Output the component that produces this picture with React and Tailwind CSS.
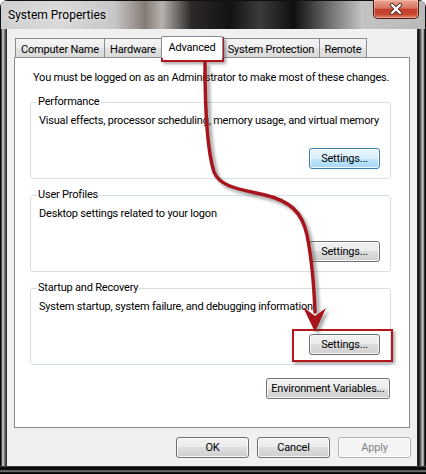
function Btn({ className = "", hot = false, disabled = false, children }) {
  let look =
    "border-[#707070] bg-[linear-gradient(#f2f2f2_0%,#ebebeb_50%,#dddddd_50%,#cfcfcf_100%)] text-black";
  if (hot)
    look =
      "border-[#3c7fb1] bg-[linear-gradient(#eaf6fd_0%,#d9f0fc_50%,#bee6fd_50%,#a7d9f5_100%)] text-black";
  if (disabled) look = "border-[#adb2b5] bg-[#f4f4f4] text-[#838383]";
  return (
    <div
      className={
        "flex h-[21px] shrink-0 items-center justify-center whitespace-nowrap rounded-[3px] border shadow-[inset_0_0_0_1px_rgba(255,255,255,0.8)] leading-none " +
        look +
        " " +
        className
      }
    >
      {children}
    </div>
  );
}

function Group({ title, desc, hot }) {
  return (
    <fieldset className="min-w-0 rounded-[3px] border border-[#d5dfe5] pb-[9px] pl-[8px] pr-[10px]">
      <legend className="-ml-[2px] px-[1px] leading-[16px]">{title}</legend>
      <div className="whitespace-nowrap pt-[3px] leading-[16px]">{desc}</div>
      <div className="mt-[19px] flex justify-end">
        <Btn className="w-[71px]" hot={hot}>
          Settings...
        </Btn>
      </div>
    </fieldset>
  );
}

function Tab({ className = "", selected = false, children }) {
  return (
    <div
      className={
        "flex shrink-0 items-center justify-center whitespace-nowrap border-l border-r border-t border-[#898c95] leading-none " +
        (selected
          ? "relative z-10 h-[22px] rounded-t-[2px] bg-white pb-[1px] "
          : "mb-[1px] h-[19px] bg-[linear-gradient(#f5f5f5_0%,#ececec_50%,#e2e2e2_50%,#dadada_100%)] pt-[2px] ") +
        className
      }
    >
      {children}
    </div>
  );
}

export default function App() {
  return (
    <div className="relative flex h-[474px] w-[426px] flex-col overflow-hidden rounded-t-[8px] bg-black font-['Roboto',sans-serif] text-[11px] tracking-[-0.2px] text-black">
      {/* Title bar */}
      <div className="flex h-[29px] shrink-0 items-start justify-between bg-[linear-gradient(90deg,#cfcfcf_0%,#dadada_14%,#c6c6c6_27%,#857b75_34%,#b7b2ae_38%,#2c2826_45%,#121212_54%,#3b3b3b_61%,#0f0f0f_69%,#6b6b6b_77%,#c3c3c3_85%,#b9b9b9_100%)] shadow-[inset_1px_1px_0_#111,inset_-1px_0_0_#111]">
        <div className="self-center pl-[8px] pt-[1px] text-[12px] tracking-normal [text-shadow:0_0_6px_rgba(255,255,255,0.95)]">
          System Properties
        </div>
        <div className="mr-[7px] flex h-[19px] w-[46px] items-center justify-center rounded-b-[5px] border border-t-0 border-[#4b1a12] bg-[linear-gradient(#eaa797_0%,#d7735f_45%,#c4402c_52%,#c7452e_78%,#e2836c_100%)] shadow-[inset_0_0_0_1px_rgba(255,200,190,0.5)]">
          <svg width="14" height="12" viewBox="0 0 14 12">
            <path d="M3 2 L11 10 M11 2 L3 10" stroke="#4a2a24" strokeWidth="4" strokeLinecap="round" fill="none" />
            <path d="M3 2 L11 10 M11 2 L3 10" stroke="#ffffff" strokeWidth="2.4" strokeLinecap="round" fill="none" />
          </svg>
        </div>
      </div>

      {/* Middle */}
      <div className="flex min-h-0 flex-1">
        <div className="w-[7px] shrink-0 bg-[linear-gradient(90deg,#050505_0px,#050505_1px,#8e8e8e_2px,#d8d8d8_3px,#5a5a5a_5px,#2a2a2a_7px)]" />
        <div className="flex min-w-0 flex-1 flex-col overflow-hidden bg-[#f0f0f0] px-[7px] pt-[7px]">
          {/* Tabs */}
          <div className="flex h-[22px] items-end pl-[1px]">
            <Tab className="w-[90px]">Computer Name</Tab>
            <Tab className="-ml-px w-[58px]">Hardware</Tab>
            <Tab className="-ml-px w-[62px]" selected>
              Advanced
            </Tab>
            <Tab className="-ml-px w-[98px]">System Protection</Tab>
            <Tab className="-ml-px w-[48px]">Remote</Tab>
          </div>
          {/* Panel */}
          <div className="-mt-px flex h-[371px] min-w-0 flex-col border border-[#898c95] bg-white pl-[15px] pr-[18px] pt-[12px]">
            <div className="flex flex-col gap-2">
              <div className="whitespace-nowrap pl-[3px] leading-[16px]">
                You must be logged on as an Administrator to make most of these changes.
              </div>
              <Group
                title="Performance"
                desc="Visual effects, processor scheduling, memory usage, and virtual memory"
                hot
              />
              <Group title="User Profiles" desc="Desktop settings related to your logon" />
              <Group
                title="Startup and Recovery"
                desc="System startup, system failure, and debugging information"
              />
            </div>
            <div className="mr-[1px] mt-[13px] flex justify-end">
              <Btn className="w-[124px]">Environment Variables...</Btn>
            </div>
          </div>
          {/* Bottom buttons */}
          <div className="-mr-[1px] mt-[9px] flex justify-end gap-[8px]">
            <Btn className="w-[73px]">OK</Btn>
            <Btn className="w-[73px]">Cancel</Btn>
            <Btn className="w-[73px]" disabled>
              Apply
            </Btn>
          </div>
        </div>
        <div className="w-[9px] shrink-0 bg-[linear-gradient(90deg,#2a2a2a_0px,#121212_2px,#7b7b7b_4px,#d6d6d6_6px,#5a5a5a_7px,#050505_8px)]" />
      </div>
      <div className="h-[8px] shrink-0 bg-[linear-gradient(#6a6a6a_0px,#0d0d0d_1px,#0d0d0d_4px,#a8a8a8_5px,#2a2a2a_6px,#000_7px)]" />

      {/* Red highlight boxes */}
      <div className="pointer-events-none absolute left-[161px] top-[37px] h-[25px] w-[63px] border-2 border-[#b3161d] shadow-[2px_2px_3px_rgba(0,0,0,0.35)]" />
      <div className="pointer-events-none absolute left-[292px] top-[329px] h-[33px] w-[101px] border-2 border-[#b3161d] shadow-[2px_2px_3px_rgba(0,0,0,0.35)]" />

      {/* Arrow */}
      <svg className="pointer-events-none absolute left-0 top-0" width="426" height="474" viewBox="0 0 426 474">
        <defs>
          <filter id="arrowShadow" x="-20%" y="-20%" width="140%" height="140%">
            <feGaussianBlur stdDeviation="1.4" />
          </filter>
        </defs>
        <g transform="translate(3,3)" filter="url(#arrowShadow)" opacity="0.45">
          <path
            d="M205 62 C205 110 207 150 214 172 C220 188 245 190 265 195 C290 201 302 212 307 235 C311 255 314 285 315 312"
            stroke="#444"
            strokeWidth="4"
            fill="none"
          />
          <polygon points="303,307 315,316 326,308 315,332" fill="#444" />
        </g>
        <path
          d="M205 62 C205 110 207 150 214 172 C220 188 245 190 265 195 C290 201 302 212 307 235 C311 255 314 285 315 312"
          stroke="#a8141c"
          strokeWidth="3.5"
          strokeLinecap="round"
          fill="none"
        />
        <polygon points="303,307 315,316 326,308 315,332" fill="#a8141c" />
      </svg>
    </div>
  );
}
